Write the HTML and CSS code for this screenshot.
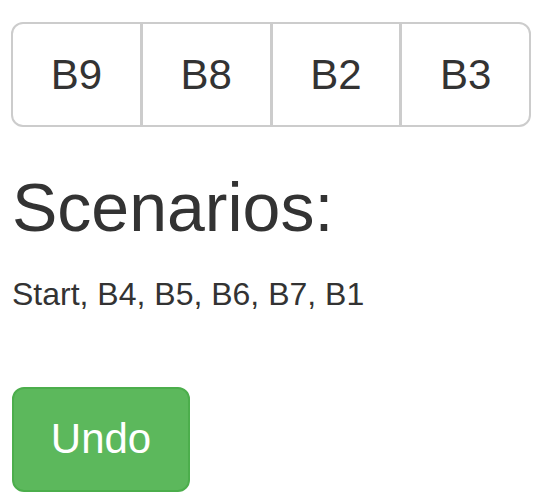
FILE: index.html
```html
<!DOCTYPE html>
<html lang="en">
<head>
    <meta charset="UTF-8">
    <meta name="viewport" content="width=device-width, initial-scale=1.0">
    <title>Scenarios</title>
    <link rel="stylesheet" href="styles.css">
</head>
<body>
    <div class="btn-group">
        <button class="btn">B9</button>
        <button class="btn">B8</button>
        <button class="btn">B2</button>
        <button class="btn">B3</button>
    </div>

    <h3 class="title">Scenarios:</h3>
    <p class="scenarios">Start, B4, B5, B6, B7, B1</p>

    <button class="btn-undo">Undo</button>
</body>
</html>
```

FILE: styles.css
```css
body {
    font-family: "Liberation Sans", Arial, sans-serif;
    color: #333;
    background-color: #fff;
    margin: 0;
    padding: 22px 11px;
}
.btn-group {
    display: flex;
    width: 520px;
}
.btn {
    flex: 1;
    height: 105px;
    font-family: inherit;
    font-size: 42px;
    line-height: 1.42857;
    color: #333;
    background-color: #fff;
    border: 2px solid #ccc;
    border-radius: 0;
    padding: 0;
    cursor: pointer;
}
.btn + .btn {
    margin-left: -1px;
}
.btn:first-child {
    border-radius: 12px 0 0 12px;
}
.btn:last-child {
    border-radius: 0 12px 12px 0;
}
.title {
    font-size: 68px;
    font-weight: 500;
    line-height: 1.1;
    margin: 43px 0 0 1px;
}
.scenarios {
    font-size: 32px;
    line-height: 1.42857;
    margin: 27px 0 0 1px;
}
.btn-undo {
    display: block;
    margin: 69px 0 0 1px;
    width: 178px;
    height: 105px;
    font-family: inherit;
    font-size: 42px;
    line-height: 1.42857;
    color: #fff;
    background-color: #5cb85c;
    border: 2px solid #4cae4c;
    border-radius: 12px;
    padding: 0;
    cursor: pointer;
}
```
